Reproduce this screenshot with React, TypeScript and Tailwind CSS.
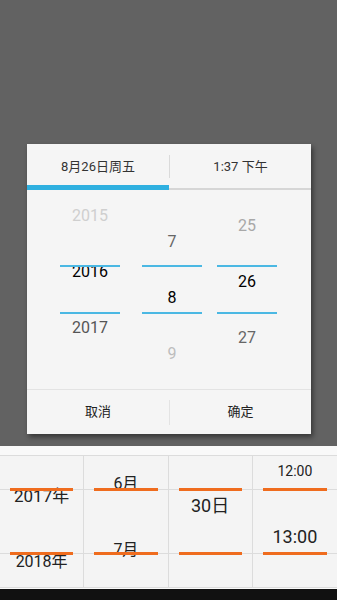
const font = { fontFamily: 'Roboto, "Noto Sans CJK SC", sans-serif' }

function Wheel({ items, pt, x }: { items: { t: string; c: string }[]; pt: string; x: string }) {
  return (
    <div className={`absolute top-0 ${x} w-[60px] flex flex-col items-center ${pt}`}>
      {items.map((it) => (
        <div key={it.t} className={`h-[56px] flex items-center justify-center text-[16px] ${it.c}`}>
          {it.t}
        </div>
      ))}
    </div>
  )
}

function BottomCol({ children, border }: { children: React.ReactNode; border?: boolean }) {
  return (
    <div className={`relative h-full w-1/4 ${border ? 'border-r border-[#dcdcdc]' : ''}`}>
      {children}
      <div className="absolute left-[10px] right-[10px] top-[32px] h-[3px] bg-[#ef6c1e]" />
      <div className="absolute left-[10px] right-[10px] top-[96px] h-[3px] bg-[#ef6c1e]" />
    </div>
  )
}

export default function App() {
  return (
    <div className="w-[337px] h-[600px] flex flex-col bg-[#626262] overflow-hidden" style={font}>
      <div className="h-[446px] pt-[144px] pl-[27px]">
        <div className="w-[284px] h-[290px] bg-[#f5f5f5] shadow-[2px_3px_5px_rgba(0,0,0,0.45)] flex flex-col">
          <div className="h-[41px] flex items-center text-[13px] text-[#333]">
            <div className="w-[142px] text-center pt-[4px]">8月26日周五</div>
            <div className="w-px h-[23px] bg-[#dadada] mt-[4px]" />
            <div className="flex-1 text-center pt-[4px]">1:37 下午</div>
          </div>
          <div className="relative h-[5px]">
            <div className="absolute left-0 right-0 bottom-0 h-[2px] bg-[#d6d6d6]" />
            <div className="absolute left-0 top-0 w-[142px] h-[5px] bg-[#2fb0e0]" />
          </div>
          <div className="relative h-[199px]">
            <Wheel
              x="left-[33px]"
              pt="-mt-[2px]"
              items={[
                { t: '2015', c: 'text-[#cfcfcf]' },
                { t: '2016', c: 'text-black' },
                { t: '2017', c: 'text-[#555]' },
              ]}
            />
            <Wheel
              x="left-[115px]"
              pt="pt-[24px]"
              items={[
                { t: '7', c: 'text-[#666]' },
                { t: '8', c: 'text-black' },
                { t: '9', c: 'text-[#bdbdbd]' },
              ]}
            />
            <Wheel
              x="left-[190px]"
              pt="pt-[8px]"
              items={[
                { t: '25', c: 'text-[#a8a8a8]' },
                { t: '26', c: 'text-black' },
                { t: '27', c: 'text-[#666]' },
              ]}
            />
            {['left-[33px]', 'left-[115px]', 'left-[190px]'].map((l) => (
              <div key={l}>
                <div className={`absolute ${l} top-[75px] w-[60px] h-[2px] bg-[#4bb8e3]`} />
                <div className={`absolute ${l} top-[122px] w-[60px] h-[2px] bg-[#4bb8e3]`} />
              </div>
            ))}
          </div>
          <div className="flex-1 border-t border-[#e3e3e3] flex items-center text-[13px] text-[#222]">
            <div className="w-[142px] text-center">取消</div>
            <div className="w-px h-[25px] bg-[#e3e3e3]" />
            <div className="flex-1 text-center">确定</div>
          </div>
        </div>
      </div>
      <div className="h-[143px] bg-[#f9f9f9] pt-[9px] flex flex-col">
        <div className="relative h-[133px] border-y border-[#dcdcdc] bg-[#f4f4f4] flex text-[#222]">
          <div className="absolute left-0 right-0 top-[33px] h-px bg-[#dcdcdc]" />
          <div className="absolute left-0 right-0 top-[97px] h-px bg-[#dcdcdc]" />
          <BottomCol border>
            <div className="flex flex-col items-center pt-[8px]">
              <div className="h-[65px] flex items-center text-[17px]">2017年</div>
              <div className="h-[65px] flex items-center text-[16px]">2018年</div>
            </div>
          </BottomCol>
          <BottomCol border>
            <div className="flex flex-col items-center -mt-[5px]">
              <div className="h-[66px] flex items-center text-[16px]">6月</div>
              <div className="h-[66px] flex items-center text-[16px]">7月</div>
            </div>
          </BottomCol>
          <BottomCol border>
            <div className="flex flex-col items-center pt-[35px]">
              <div className="h-[28px] flex items-center text-[18px]">30日</div>
            </div>
          </BottomCol>
          <BottomCol>
            <div className="flex flex-col items-center -mt-[18px]">
              <div className="h-[66px] flex items-center text-[14px]">12:00</div>
              <div className="h-[65px] flex items-center text-[18px]">13:00</div>
            </div>
          </BottomCol>
        </div>
      </div>
      <div className="flex-1 bg-[#111]" />
    </div>
  )
}
